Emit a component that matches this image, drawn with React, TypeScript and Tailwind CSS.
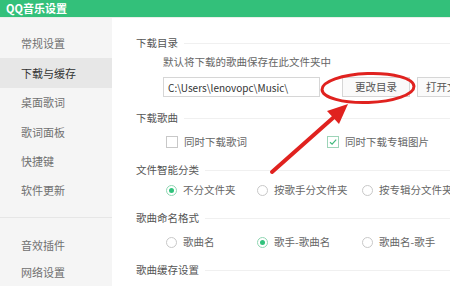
import React from "react";

const font = { fontFamily: '"Noto Sans CJK SC", "Noto Sans", sans-serif' };

function Heading({ text, className = "" }: { text: string; className?: string }) {
  return (
    <div className={"flex items-center h-[20px] " + className}>
      <span className="text-[10.5px] text-[#555] whitespace-nowrap">{text}</span>
      <div className="flex-1 h-px bg-[#f0f0f0] ml-[6px]" />
    </div>
  );
}

function Radio({ checked, label, w }: { checked?: boolean; label: string; w?: string }) {
  return (
    <div className={"flex items-center shrink-0 " + (w ?? "")}>
      <div
        className={
          "w-[11px] h-[11px] rounded-full border flex items-center justify-center bg-white " +
          (checked ? "border-[#8fd6b2]" : "border-[#c8c8c8]")
        }
      >
        {checked && <div className="w-[5px] h-[5px] rounded-full bg-[#31c27c]" />}
      </div>
      <span className="ml-[6px] text-[10.5px] text-[#666] whitespace-nowrap">{label}</span>
    </div>
  );
}

function Check({ checked, label, w }: { checked?: boolean; label: string; w?: string }) {
  return (
    <div className={"flex items-center shrink-0 " + (w ?? "")}>
      <div
        className={
          "w-[12px] h-[12px] border flex items-center justify-center bg-white " +
          (checked ? "border-[#9dd4b8]" : "border-[#c8c8c8]")
        }
      >
        {checked && (
          <svg width="10" height="10" viewBox="0 0 10 10">
            <path d="M2 5.2 L4.1 7.2 L8.2 2.6" fill="none" stroke="#3fb97c" strokeWidth="1.2" />
          </svg>
        )}
      </div>
      <span className="ml-[6px] text-[10.5px] text-[#666] whitespace-nowrap">{label}</span>
    </div>
  );
}

export default function App() {
  const side = ["常规设置", "下载与缓存", "桌面歌词", "歌词面板", "快捷键", "软件更新"];
  return (
    <div className="relative w-[450px] h-[286px] overflow-hidden bg-white flex flex-col" style={font}>
      <div className="h-[17px] shrink-0 bg-[#33c07a] flex items-center pl-[6px]">
        <span className="text-[11px] text-white font-semibold leading-none">QQ音乐设置</span>
      </div>
      <div className="flex flex-1 min-h-0 border-t border-[#e9efe9]">
        <div className="w-[112px] shrink-0 bg-[#f5f5f5] pt-[11px] flex flex-col">
          {side.map((s, i) => (
            <div
              key={s}
              className={
                "h-[30.5px] flex items-center pl-[21px] text-[11px] " +
                (i === 1 ? "bg-[#e7e7e7] text-[#333]" : "text-[#707070]")
              }
            >
              {s}
            </div>
          ))}
          <div className="h-px bg-[#e6e6e6] mt-[12px] mb-[14px]" />
          <div className="h-[28px] flex items-center pl-[21px] text-[11px] text-[#707070]">音效插件</div>
          <div className="h-[28px] flex items-center pl-[21px] text-[11px] text-[#707070]">网络设置</div>
        </div>
        <div className="flex-1 pl-[24px] pt-[15px] flex flex-col">
          <Heading text="下载目录" />
          <div className="h-[18px] flex items-center pl-[27px] text-[10.5px] text-[#666] whitespace-nowrap">
            默认将下载的歌曲保存在此文件夹中
          </div>
          <div className="mt-[6px] h-[20px] flex items-center pl-[27px]">
            <div className="w-[157px] h-[20px] shrink-0 border border-[#d6d6d6] bg-white flex items-center pl-[4px] text-[10px] text-[#333] whitespace-nowrap">
              C:\Users\lenovopc\Music\
            </div>
            <div className="ml-[22px] w-[68px] h-[20px] shrink-0 border border-[#d6d6d6] bg-[#fafafa] flex items-center justify-center text-[10.5px] text-[#555]">
              更改目录
            </div>
            <div className="ml-[7px] w-[68px] h-[20px] shrink-0 border border-[#d6d6d6] bg-[#fafafa] flex items-center pl-[8px] text-[10.5px] text-[#555] whitespace-nowrap">
              打开文件夹
            </div>
          </div>
          <Heading text="下载歌曲" className="mt-[11px]" />
          <div className="h-[20px] mt-[4px] flex items-center pl-[30px]">
            <Check label="同时下载歌词" w="w-[161px]" />
            <Check checked label="同时下载专辑图片" />
          </div>
          <Heading text="文件智能分类" className="mt-[8px]" />
          <div className="h-[20px] flex items-center pl-[30px]">
            <Radio checked label="不分文件夹" w="w-[91px]" />
            <Radio label="按歌手分文件夹" w="w-[105px]" />
            <Radio label="按专辑分文件夹" />
          </div>
          <Heading text="歌曲命名格式" className="mt-[8px]" />
          <div className="h-[20px] mt-[4px] flex items-center pl-[30px]">
            <Radio label="歌曲名" w="w-[91px]" />
            <Radio checked label="歌手-歌曲名" w="w-[105px]" />
            <Radio label="歌曲名-歌手" />
          </div>
          <Heading text="歌曲缓存设置" className="mt-[8px]" />
        </div>
      </div>
      <svg className="absolute inset-0 pointer-events-none" width="450" height="286" viewBox="0 0 450 286">
        <ellipse cx="368" cy="88" rx="46" ry="14.5" fill="none" stroke="#e0221f" strokeWidth="3" transform="rotate(-2 368 88)" />
        <line x1="272" y1="172" x2="334" y2="117" stroke="#e0221f" strokeWidth="4" strokeLinecap="round" />
        <polygon points="348,104 339,124 327,111" fill="#e0221f" />
      </svg>
    </div>
  );
}
